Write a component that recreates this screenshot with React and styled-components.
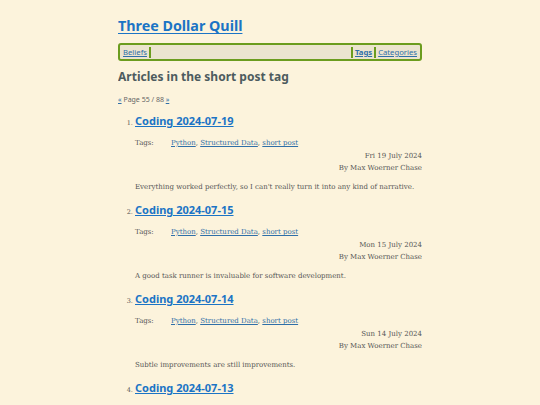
import React from 'react';
import styled, { createGlobalStyle } from 'styled-components';

const GlobalStyle = createGlobalStyle`
  html, body {
    margin: 0;
    padding: 0;
    background: #fcf3dc;
  }
  body {
    font-family: "DejaVu Serif", serif;
    color: #555;
  }
`;

const posts = [
  { title: 'Coding 2024-07-19', date: 'Fri 19 July 2024', summary: "Everything worked perfectly, so I can't really turn it into any kind of narrative." },
  { title: 'Coding 2024-07-15', date: 'Mon 15 July 2024', summary: 'A good task runner is invaluable for software development.' },
  { title: 'Coding 2024-07-14', date: 'Sun 14 July 2024', summary: 'Subtle improvements are still improvements.' },
  { title: 'Coding 2024-07-13', date: 'Sat 13 July 2024', summary: 'More work.' },
];

const tags = ['Python', 'Structured Data', 'short post'];

const App = () => {
  return (
    <Page>
      <GlobalStyle />
      <SiteTitle href="#">Three Dollar Quill</SiteTitle>
      <Nav>
        <NavLink href="#">Beliefs</NavLink>
        <Sep />
        <Spacer />
        <Sep />
        <NavLink href="#" $current>Tags</NavLink>
        <Sep />
        <NavLink href="#">Categories</NavLink>
      </Nav>
      <Heading>Articles in the short post tag</Heading>
      <Pager>
        <PagerLink href="#">«</PagerLink> Page 55 / 88 <PagerLink href="#">»</PagerLink>
      </Pager>
      <PostList start={1}>
        {posts.map((post) => (
          <Post key={post.title}>
            <PostTitle href="#">{post.title}</PostTitle>
            <TagRow>
              <TagLabel>Tags:</TagLabel>
              <span>
                {tags.map((t, i) => (
                  <React.Fragment key={t}>
                    <TagLink href="#">{t}</TagLink>
                    {i < tags.length - 1 && ', '}
                  </React.Fragment>
                ))}
              </span>
            </TagRow>
            <Meta>{post.date}</Meta>
            <Meta>By Max Woerner Chase</Meta>
            <Summary>{post.summary}</Summary>
          </Post>
        ))}
      </PostList>
    </Page>
  );
};

export default App;

const Page = styled.div`
  width: 304px;
  margin: 0 auto;
  padding-top: 15px;
  height: 390px;
  overflow: hidden;
`;

const SiteTitle = styled.a`
  display: inline-block;
  font-family: "Noto Sans", sans-serif;
  font-weight: 700;
  font-size: 14.3px;
  line-height: 22px;
  color: #1b74c5;
  text-decoration: underline;
  text-underline-offset: 2px;
`;

const Nav = styled.nav`
  display: flex;
  align-items: center;
  margin-top: 6px;
  height: 12px;
  padding: 1px 1px;
  border: 2px solid #6b9c1e;
  border-radius: 3px;
  background: #ebe4cf;
  font-family: "Noto Sans", sans-serif;
  font-size: 7.7px;
`;

const NavLink = styled.a`
  color: #2f6fa8;
  font-weight: ${(p) => (p.$current ? 700 : 400)};
  padding: 0 2px;
`;

const Sep = styled.span`
  width: 2px;
  height: 11px;
  background: #6b9c1e;
`;

const Spacer = styled.span`
  flex: 1;
`;

const Heading = styled.h2`
  margin: 7px 0 0;
  font-family: "Noto Sans", sans-serif;
  font-weight: 700;
  font-size: 12px;
  line-height: 18px;
  color: #4d5b5e;
`;

const Pager = styled.p`
  margin: 9px 0 0;
  font-family: "Noto Sans", sans-serif;
  font-size: 7px;
  color: #666;
`;

const PagerLink = styled.a`
  color: #2f6fa8;
`;

const PostList = styled.ol`
  margin: 9px 0 0;
  padding-left: 17px;
  font-size: 6.5px;
`;

const Post = styled.li`
  margin-bottom: 9px;
  &::marker {
    color: #555;
  }
`;

const PostTitle = styled.a`
  font-family: "Noto Sans", sans-serif;
  font-weight: 700;
  font-size: 11px;
  line-height: 16px;
  color: #1b74c5;
`;

const TagRow = styled.div`
  display: flex;
  margin: 8px 0 1px;
  font-size: 7px;
  line-height: 12px;
`;

const TagLabel = styled.span`
  width: 36px;
`;

const TagLink = styled.a`
  color: #2f6fa8;
`;

const Meta = styled.div`
  text-align: right;
  font-size: 7px;
  line-height: 12px;
`;

const Summary = styled.p`
  margin: 7px 0 0;
  font-size: 7px;
  line-height: 12px;
`;
